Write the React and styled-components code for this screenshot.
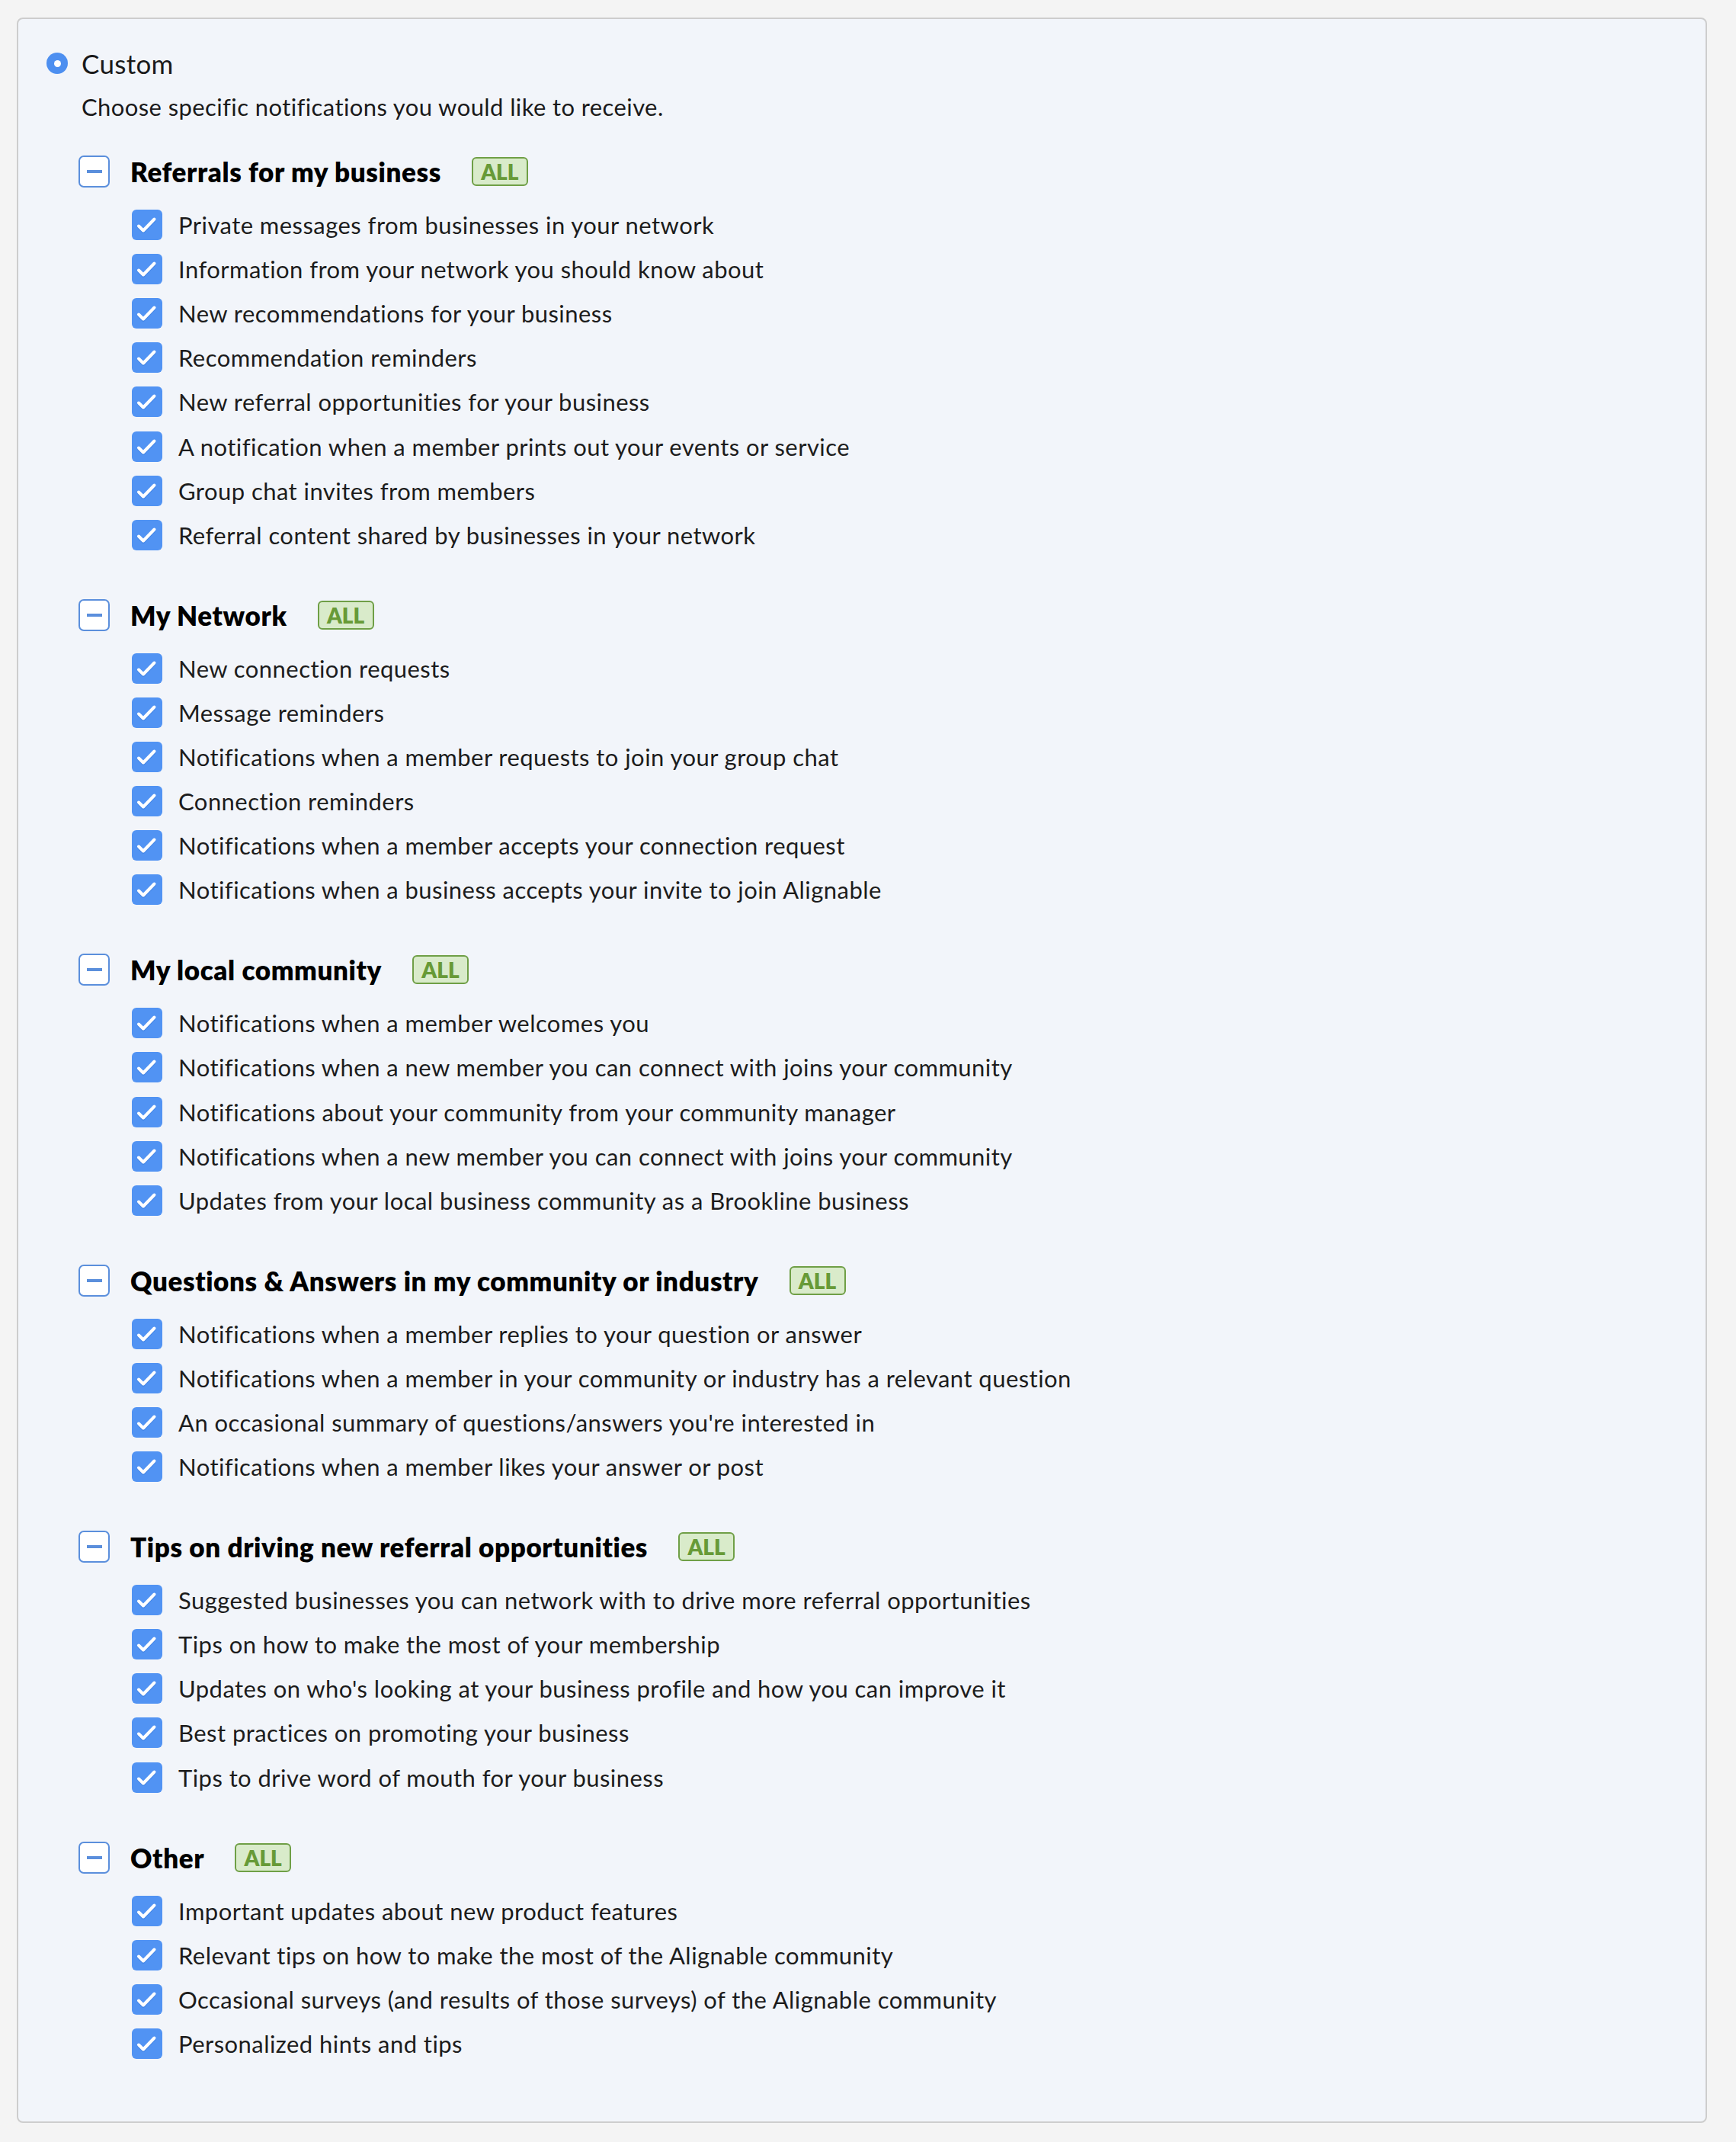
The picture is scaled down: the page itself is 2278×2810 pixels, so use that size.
import React from "react";
import styled, { createGlobalStyle } from "styled-components";

const GlobalStyle = createGlobalStyle`
  body {
    margin: 0;
    background: #f4f4f4;
    font-family: Lato, "Liberation Sans", sans-serif;
    color: #1c1c1c;
  }
`;

const sections = [
  {
    title: "Referrals for my business",
    items: [
      "Private messages from businesses in your network",
      "Information from your network you should know about",
      "New recommendations for your business",
      "Recommendation reminders",
      "New referral opportunities for your business",
      "A notification when a member prints out your events or service",
      "Group chat invites from members",
      "Referral content shared by businesses in your network",
    ],
  },
  {
    title: "My Network",
    items: [
      "New connection requests",
      "Message reminders",
      "Notifications when a member requests to join your group chat",
      "Connection reminders",
      "Notifications when a member accepts your connection request",
      "Notifications when a business accepts your invite to join Alignable",
    ],
  },
  {
    title: "My local community",
    items: [
      "Notifications when a member welcomes you",
      "Notifications when a new member you can connect with joins your community",
      "Notifications about your community from your community manager",
      "Notifications when a new member you can connect with joins your community",
      "Updates from your local business community as a Brookline business",
    ],
  },
  {
    title: "Questions & Answers in my community or industry",
    items: [
      "Notifications when a member replies to your question or answer",
      "Notifications when a member in your community or industry has a relevant question",
      "An occasional summary of questions/answers you're interested in",
      "Notifications when a member likes your answer or post",
    ],
  },
  {
    title: "Tips on driving new referral opportunities",
    items: [
      "Suggested businesses you can network with to drive more referral opportunities",
      "Tips on how to make the most of your membership",
      "Updates on who's looking at your business profile and how you can improve it",
      "Best practices on promoting your business",
      "Tips to drive word of mouth for your business",
    ],
  },
  {
    title: "Other",
    items: [
      "Important updates about new product features",
      "Relevant tips on how to make the most of the Alignable community",
      "Occasional surveys (and results of those surveys) of the Alignable community",
      "Personalized hints and tips",
    ],
  },
];

function App() {
  return (
    <>
      <GlobalStyle />
      <Card>
        <RadioRow>
          <Radio />
          <RadioLabel>Custom</RadioLabel>
        </RadioRow>
        <Description>Choose specific notifications you would like to receive.</Description>
        <Sections>
          {sections.map((s) => (
            <Section key={s.title}>
              <SectionHeader>
                <Toggle />
                <SectionTitle>{s.title}</SectionTitle>
                <AllBadge>ALL</AllBadge>
              </SectionHeader>
              <ItemList>
                {s.items.map((item, i) => (
                  <Item key={i}>
                    <CheckBox>
                      <svg width="40" height="40" viewBox="0 0 40 40">
                        <path
                          d="M9 21.5 L15 27.5 L29.5 12.5"
                          fill="none"
                          stroke="#2f6fd0"
                          strokeOpacity="0.35"
                          strokeWidth="4"
                          strokeLinecap="round"
                          strokeLinejoin="round"
                          transform="translate(0 1.5)"
                        />
                        <path
                          d="M9 21.5 L15 27.5 L29.5 12.5"
                          fill="none"
                          stroke="#fff"
                          strokeWidth="4"
                          strokeLinecap="round"
                          strokeLinejoin="round"
                        />
                      </svg>
                    </CheckBox>
                    <ItemText>{item}</ItemText>
                  </Item>
                ))}
              </ItemList>
            </Section>
          ))}
        </Sections>
      </Card>
    </>
  );
}

const Card = styled.div`
  margin: 23px 0 0 22px;
  width: 2218px;
  height: 2762px;
  box-sizing: border-box;
  background: #f2f5fa;
  border: 2px solid #cdcdcd;
  border-radius: 8px;
  padding: 38px 37px 0;
`;

const RadioRow = styled.div`
  display: flex;
  align-items: center;
  gap: 18px;
  height: 40px;
`;

const Radio = styled.span`
  width: 28px;
  height: 28px;
  border-radius: 50%;
  background: #4d8ff0;
  display: flex;
  align-items: center;
  justify-content: center;
  &::after {
    content: "";
    width: 9px;
    height: 9px;
    border-radius: 50%;
    background: #fff;
  }
`;

const RadioLabel = styled.span`
  font-size: 35px;
  letter-spacing: 0.3px;
  color: #1a1a1a;
`;

const Description = styled.p`
  margin: 17px 0 0 46px;
  line-height: 40px;
  font-size: 31px;
  letter-spacing: 0.4px;
  color: #1a1a1a;
`;

const Sections = styled.div`
  margin: 44px 0 0 42px;
  display: flex;
  flex-direction: column;
  gap: 55px;
`;

const Section = styled.section`
  display: flex;
  flex-direction: column;
`;

const SectionHeader = styled.div`
  display: flex;
  align-items: center;
  height: 42px;
`;

const Toggle = styled.span`
  width: 41px;
  height: 42px;
  box-sizing: border-box;
  border: 2px solid #5b8fdc;
  border-radius: 7px;
  background: #fff;
  display: flex;
  align-items: center;
  justify-content: center;
  margin-right: 27px;
  &::after {
    content: "";
    width: 20px;
    height: 4px;
    background: #5b8fdc;
  }
`;

const SectionTitle = styled.h3`
  margin: 0 40px 0 0;
  font-size: 35px;
  letter-spacing: 0.6px;
  font-weight: 800;
  color: #000;
`;

const AllBadge = styled.span`
  box-sizing: border-box;
  width: 74px;
  height: 38px;
  border: 2px solid #6f9f46;
  border-radius: 6px;
  background: #d9ebca;
  color: #679a37;
  font-size: 28px;
  font-weight: 800;
  display: flex;
  align-items: center;
  justify-content: center;
`;

const ItemList = styled.ul`
  list-style: none;
  margin: 20px 0 0 70px;
  padding: 0;
`;

const Item = styled.li`
  display: flex;
  align-items: center;
  height: 58.1px;
  gap: 21px;
`;

const CheckBox = styled.span`
  width: 40px;
  height: 40px;
  border-radius: 6px;
  background: #5193f3;
  display: flex;
  flex-shrink: 0;
`;

const ItemText = styled.span`
  font-size: 31px;
  letter-spacing: 0.45px;
  color: #1c1c1c;
`;

export default App;
